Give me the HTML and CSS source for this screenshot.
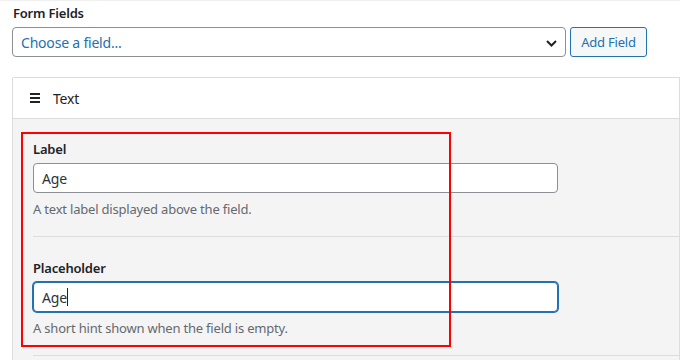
FILE: index.html
```html
<!DOCTYPE html>
<html lang="en">
<head>
<meta charset="utf-8">
<title>Form Fields</title>
<link rel="stylesheet" href="styles.css">
</head>
<body>
<div class="wrap">
  <div class="section-title">Form Fields</div>
  <div class="add-row">
    <div class="select">
      <span class="select-text">Choose a field...</span>
      <svg class="chevron" width="11" height="7" viewBox="0 0 11 7"><path d="M1 1 L5.5 5.5 L10 1" fill="none" stroke="#1d2327" stroke-width="2"/></svg>
    </div>
    <div class="button">Add Field</div>
  </div>
  <div class="card">
    <div class="card-header">
      <svg class="handle" width="10" height="10" viewBox="0 0 10 10"><rect x="0" y="0" width="10" height="2" fill="#1d2327"/><rect x="0" y="4" width="10" height="2" fill="#1d2327"/><rect x="0" y="8" width="10" height="2" fill="#1d2327"/></svg>
      <span class="card-title">Text</span>
    </div>
    <div class="card-body">
      <div class="row">
        <div class="label">Label</div>
        <div class="input"><span>Age</span></div>
        <div class="help">A text label displayed above the field.</div>
      </div>
      <div class="row">
        <div class="label">Placeholder</div>
        <div class="input focused"><span>Age</span><span class="caret"></span></div>
        <div class="help">A short hint shown when the field is empty.</div>
      </div>
      <div class="highlight"></div>
    </div>
  </div>
</div>
</body>
</html>
```

FILE: styles.css
```css
* { box-sizing: border-box; }
html, body { margin: 0; padding: 0; background: #fff; }
body {
  font-family: "Noto Sans", "Open Sans", sans-serif;
  letter-spacing: -0.2px;
  color: #1d2327;
  width: 680px;
  height: 360px;
  overflow: hidden;
}
.wrap {
  width: 680px;
  height: 360px;
  overflow: hidden;
  border-top: 1px solid #f0f0f1;
  padding-left: 12px;
  padding-top: 3px;
}
.section-title {
  font-size: 13px;
  font-weight: 600;
  line-height: 18px;
  padding-left: 1px;
}
.add-row {
  display: flex;
  gap: 4px;
  margin-top: 5px;
}
.select {
  width: 554px;
  height: 30px;
  border: 1px solid #8c8f94;
  border-radius: 4px;
  background: #fff;
  display: flex;
  align-items: center;
  justify-content: space-between;
  padding: 0 8px 0 8px;
}
.select-text {
  color: #2271b1;
  font-size: 14px;
}
.chevron { display: block; margin-top: 2px; }
.button {
  width: 77px;
  height: 30px;
  border: 1px solid #2271b1;
  border-radius: 3px;
  background: #f6f7f7;
  color: #2271b1;
  font-size: 13px;
  display: flex;
  align-items: center;
  justify-content: center;
}
.card {
  margin-top: 20px;
  border: 1px solid #dcdcde;
  border-bottom: none;
  border-radius: 2px 0 0 0;
}
.card-header {
  height: 41px;
  background: #fff;
  border-bottom: 1px solid #dcdcde;
  display: flex;
  align-items: center;
  padding-left: 17px;
  gap: 13px;
}
.handle { display: block; }
.card-title { font-size: 14px; }
.card-body {
  position: relative;
  background: #f4f4f4;
  padding-left: 20px;
  height: 241px;
}
.row {
  padding: 21px 0 18px;
  border-bottom: 1px solid #dcdcde;
}
.row + .row { padding-top: 22px; }
.label {
  font-size: 13px;
  font-weight: 600;
  line-height: 18px;
}
.input {
  margin-top: 5px;
  width: 525px;
  height: 30px;
  background: #fff;
  border: 1px solid #8c8f94;
  border-radius: 4px;
  padding: 0 8px;
  display: flex;
  align-items: center;
  font-size: 14px;
  color: #2c3338;
}
.input.focused {
  border-color: #2271b1;
  box-shadow: 0 0 0 1px #2271b1;
}
.caret {
  display: inline-block;
  width: 1px;
  height: 18px;
  background: #1d2327;
}
.help {
  margin-top: 7px;
  font-size: 13px;
  line-height: 18px;
  color: #646970;
}
.highlight {
  position: absolute;
  left: 8px;
  top: 13px;
  width: 430px;
  height: 215px;
  border: 2px solid #f00;
}
```
